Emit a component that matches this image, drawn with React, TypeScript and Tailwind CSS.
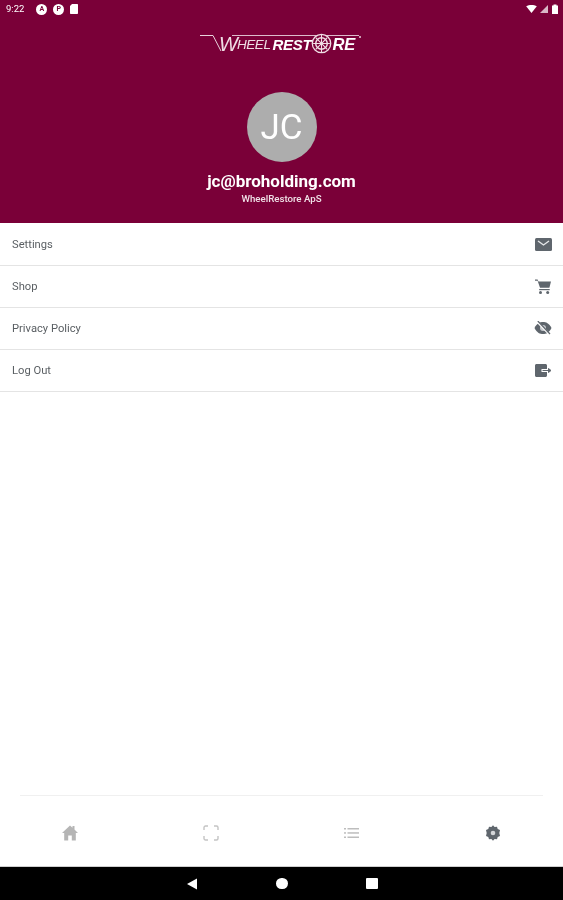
import React from 'react';

const menuItems = ['Settings', 'Shop', 'Privacy Policy', 'Log Out'];

const MenuIcon = ({ index }: { index: number }) => {
  if (index === 0) {
    return (
      <svg viewBox="0 0 17 13" className="h-[13px] w-[17px]">
        <rect x="0" y="0" width="17" height="13" rx="1.5" fill="#5f666d" />
        <path d="M3 3 L8.5 7 L14 3" fill="none" stroke="#e6e8ea" strokeWidth="1.4" />
      </svg>
    );
  }
  if (index === 1) {
    return (
      <svg viewBox="0 0 16 15" className="-mt-[1px] h-[15px] w-4">
        <path d="M0 0.5 H2.6 L3.4 2.5 H16 L14.4 8.8 H5 L2.6 1.8 H0 Z" fill="#5f666d" />
        <rect x="4.2" y="10" width="10.5" height="1.2" fill="#5f666d" />
        <circle cx="5.5" cy="13.4" r="1.5" fill="#5f666d" />
        <circle cx="12.7" cy="13.4" r="1.5" fill="#5f666d" />
      </svg>
    );
  }
  if (index === 2) {
    return (
      <svg viewBox="0 0 18 14" className="-mt-[1px] h-[14px] w-[18px]">
        <path d="M0.5 7 C3 2 6 1 9 1 C12 1 15 2 17.5 7 C15 12 12 13 9 13 C6 13 3 12 0.5 7 Z" fill="#5f666d" />
        <circle cx="9" cy="7" r="3" fill="#c9ccd0" />
        <path d="M3 0.5 L15.5 13.5" stroke="#ffffff" strokeWidth="2" />
        <path d="M3.8 0 L16 13" stroke="#5f666d" strokeWidth="1.2" />
      </svg>
    );
  }
  return (
    <svg viewBox="0 0 17 13" className="h-[13px] w-[17px]">
      <path d="M1.5 0 H10.5 C11.3 0 12 0.7 12 1.5 V5 H6.5 V8 H12 V11.5 C12 12.3 11.3 13 10.5 13 H1.5 C0.7 13 0 12.3 0 11.5 V1.5 C0 0.7 0.7 0 1.5 0 Z" fill="#5f666d" />
      <path d="M7.5 6.5 H13.5 M13.5 4.5 L16 6.5 L13.5 8.5 Z" fill="#5f666d" stroke="#5f666d" strokeWidth="1" />
    </svg>
  );
};

const Logo = () => (
  <div className="relative flex h-5 w-[163px] items-center font-['Liberation_Sans',sans-serif] text-[#efdde4]">
    <span className="absolute top-[2px] left-[32px] h-px w-[127px] bg-[#dcbccb]" />
    <svg viewBox="0 0 22 20" className="h-5 w-[22px] shrink-0">
      <path d="M0 2.5 H13 L21 18" fill="none" stroke="#e9d3dc" strokeWidth="1" />
    </svg>
    <span className="-ml-[3px] mt-[2px] text-[20px] leading-none font-light italic">W</span>
    <span className="-ml-[1px] mt-[3px] text-[13.5px] leading-none tracking-[-0.4px] italic">HEEL</span>
    <span className="ml-[2px] mt-[3px] text-[15px] leading-none font-bold tracking-[-0.3px] text-white italic">REST</span>
    <svg viewBox="0 0 20 20" className="z-10 h-[21px] w-[21px] shrink-0">
      <g fill="none" stroke="#f1dfe6">
        <circle cx="10" cy="10" r="8.8" strokeWidth="1.2" fill="#7a0038" />
        <circle cx="10" cy="10" r="5.5" strokeWidth="1.4" />
        <path d="M10 2 V18 M2 10 H18 M4.5 4.5 L15.5 15.5 M15.5 4.5 L4.5 15.5" strokeWidth="1" />
      </g>
    </svg>
    <span className="mt-[3px] text-[16.5px] leading-none font-bold text-white italic">RE</span>
    <span className="mb-3 ml-[4px] h-[2px] w-[2px] rounded-full bg-[#e9d3dc]" />
  </div>
);

export default function App() {
  return (
    <div className="flex h-[900px] flex-col overflow-hidden bg-white font-['Roboto',sans-serif] blur-[0.5px]">
      <header className="flex h-[223px] flex-col bg-[#7a0038]">
        <div className="flex h-[18px] items-center justify-between pr-[5px] pl-[6px] text-white">
          <div className="flex items-center gap-[6px]">
            <span className="mr-[6px] text-[9.5px] leading-none">9:22</span>
            <span className="flex h-[11px] w-[11px] items-center justify-center rounded-full bg-white text-[7px] font-bold text-[#7a0038]">A</span>
            <span className="flex h-[11px] w-[11px] items-center justify-center rounded-full bg-white text-[7px] font-bold text-[#7a0038]">P</span>
            <svg viewBox="0 0 8 10" className="h-[10px] w-2">
              <path d="M2 0 H7 C7.6 0 8 0.4 8 1 V9 C8 9.6 7.6 10 7 10 H1 C0.4 10 0 9.6 0 9 V2 Z" fill="#ffffff" />
            </svg>
          </div>
          <div className="flex items-center gap-[3px]">
            <svg viewBox="0 0 12 9" className="h-2 w-[11px]">
              <path d="M0 1.5 C3.5 -0.5 8.5 -0.5 12 1.5 L6 9 Z" fill="#ffffff" />
            </svg>
            <svg viewBox="0 0 8 8" className="h-2 w-2">
              <path d="M8 0 V8 H0 Z" fill="#d9b8c7" />
            </svg>
            <svg viewBox="0 0 6 10" className="ml-[1px] h-[10px] w-[6px]">
              <path d="M1.5 0.5 H4.5 V1.5 H6 V10 H0 V1.5 H1.5 Z" fill="#ffffff" />
            </svg>
          </div>
        </div>
        <div className="mt-[15px] flex justify-center">
          <Logo />
        </div>
        <div className="mt-[39px] flex flex-col items-center text-white">
          <div className="flex h-[70px] w-[70px] items-center justify-center rounded-full bg-[#adadad] text-[35px] leading-none">
            JC
          </div>
          <p className="mt-[10px] text-[17px] leading-[19px] font-bold">jc@broholding.com</p>
          <p className="mt-[2px] text-[9.7px] leading-[12px] font-medium text-[#f0e0e7]">WheelRestore ApS</p>
        </div>
      </header>

      <main className="flex-1 pt-px">
        {menuItems.map((label, i) => (
          <div key={label} className="flex h-[42px] items-center justify-between border-b border-[#e4e4e4] pr-[11px] pl-[12px]">
            <span className="pt-[2px] text-[11.2px] text-[#5a5f63]">{label}</span>
            <span className="flex w-[18px] justify-center">
              <MenuIcon index={i} />
            </span>
          </div>
        ))}
      </main>

      <nav className="flex h-[71px] flex-col">
        <div className="mx-[20px] border-t border-[#f0f0f0]" />
        <div className="grid flex-1 grid-cols-4 pt-[3px]">
          <div className="flex items-center justify-center">
            <svg viewBox="0 0 16 16" className="h-4 w-4">
              <path d="M8 0.5 L10.5 2.8 V1 H12.5 V4.6 L16 8 H13.8 V15.5 H9.8 V10.5 H6.2 V15.5 H2.2 V8 H0 Z" fill="#b5b5b5" />
            </svg>
          </div>
          <div className="flex items-center justify-center">
            <svg viewBox="0 0 16 16" className="h-4 w-4" fill="none" stroke="#c4c4c4" strokeWidth="1.4">
              <path d="M1 5 V2.5 C1 1.7 1.7 1 2.5 1 H5 M11 1 H13.5 C14.3 1 15 1.7 15 2.5 V5 M15 11 V13.5 C15 14.3 14.3 15 13.5 15 H11 M5 15 H2.5 C1.7 15 1 14.3 1 13.5 V11" />
            </svg>
          </div>
          <div className="flex items-center justify-center">
            <svg viewBox="0 0 15 12" className="h-3 w-[15px]" fill="#bdbdbd">
              <rect x="0" y="1" width="2" height="1.5" />
              <rect x="0" y="5.2" width="2" height="1.5" />
              <rect x="0" y="9.5" width="2" height="1.5" />
              <rect x="3.5" y="1" width="11.5" height="1.5" />
              <rect x="3.5" y="5.2" width="11.5" height="1.5" />
              <rect x="3.5" y="9.5" width="11.5" height="1.5" />
            </svg>
          </div>
          <div className="flex items-center justify-center">
            <svg viewBox="0 0 16 16" className="h-4 w-4">
              <path d="M8 0.3 L9.6 2 L12 1.7 L12.7 4 L15 5 L14.3 8 L15 11 L12.7 12 L12 14.3 L9.6 14 L8 15.7 L6.4 14 L4 14.3 L3.3 12 L1 11 L1.7 8 L1 5 L3.3 4 L4 1.7 L6.4 2 Z" fill="#5f666d" />
              <circle cx="8" cy="8" r="2.3" fill="#d5d7da" />
            </svg>
          </div>
        </div>
      </nav>

      <footer className="flex h-[34px] items-center justify-center gap-[78px] border-t border-[#cfcfcf] bg-black">
        <svg viewBox="0 0 12 12" className="h-3 w-3">
          <path d="M11 0.5 V11.5 L1 6 Z" fill="#ffffff" />
        </svg>
        <span className="h-[11px] w-3 rounded-full bg-white" />
        <span className="h-[11px] w-3 rounded-[1px] bg-white" />
      </footer>
    </div>
  );
}
